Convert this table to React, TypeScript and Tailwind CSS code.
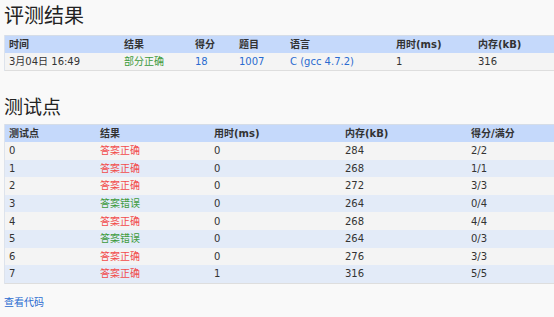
import React from 'react'

const FONT = "font-['DejaVu_Sans','Noto_Sans_CJK_SC',sans-serif]"

// 评测结果表的列宽（截图实测）
const SUMMARY_COLS = 'grid-cols-[115px_71px_44px_51px_106px_82px_1fr]'
const CASE_COLS = 'grid-cols-[91px_114px_131px_126px_1fr]'

type Case = { id: number; ok: boolean; time: number; mem: number; score: string }

const CASES: Case[] = [
  { id: 0, ok: true, time: 0, mem: 284, score: '2/2' },
  { id: 1, ok: true, time: 0, mem: 268, score: '1/1' },
  { id: 2, ok: true, time: 0, mem: 272, score: '3/3' },
  { id: 3, ok: false, time: 0, mem: 264, score: '0/4' },
  { id: 4, ok: true, time: 0, mem: 268, score: '4/4' },
  { id: 5, ok: false, time: 0, mem: 264, score: '0/3' },
  { id: 6, ok: true, time: 0, mem: 276, score: '3/3' },
  { id: 7, ok: true, time: 1, mem: 316, score: '5/5' },
]

const Cell: React.FC<{ children: React.ReactNode; className?: string }> = ({ children, className = '' }) => (
  <div className={`px-1 flex items-center whitespace-nowrap ${className}`}>{children}</div>
)

export default function App() {
  return (
    <div className={`w-[554px] h-[317px] bg-[#f9f9f9] text-[#333] text-[10px] overflow-hidden ${FONT}`}>
      <h1 className="pl-[4px] pt-[4px] text-[20px] leading-[24px] text-[#222] font-normal">评测结果</h1>

      <div className="ml-[4px] mt-[7px] border-l border-[#dde3ec]">
        <div className={`grid ${SUMMARY_COLS} h-[18px] bg-[#c5d9fb] border-t border-[#d5dde8] font-bold text-[#333]`}>
          <Cell>时间</Cell>
          <Cell>结果</Cell>
          <Cell>得分</Cell>
          <Cell>题目</Cell>
          <Cell>语言</Cell>
          <Cell>用时(ms)</Cell>
          <Cell>内存(kB)</Cell>
        </div>
        <div className={`grid ${SUMMARY_COLS} h-[18px] bg-[#f4f4f4] border-b border-[#dedede]`}>
          <Cell>3月04日 16:49</Cell>
          <Cell className="text-[#3c9a3c]">部分正确</Cell>
          <Cell className="text-[#2a6bd0]">18</Cell>
          <Cell className="text-[#2a6bd0]">1007</Cell>
          <Cell className="text-[#2a6bd0]">C (gcc 4.7.2)</Cell>
          <Cell>1</Cell>
          <Cell>316</Cell>
        </div>
      </div>

      <h2 className="pl-[4px] mt-[24px] text-[19px] leading-[24px] text-[#222] font-normal">测试点</h2>

      <div className="ml-[4px] mt-[5px] border-l border-[#dde3ec]">
        <div className={`grid ${CASE_COLS} h-[18px] bg-[#c5d9fb] border-t border-[#d5dde8] font-bold`}>
          <Cell>测试点</Cell>
          <Cell>结果</Cell>
          <Cell>用时(ms)</Cell>
          <Cell>内存(kB)</Cell>
          <Cell>得分/满分</Cell>
        </div>
        {CASES.map((c, i) => (
          <div
            key={c.id}
            className={`grid ${CASE_COLS} h-[17.6px] ${i % 2 === 0 ? 'bg-[#f4f4f4]' : 'bg-[#e3ebf8]'}`}
          >
            <Cell>{c.id}</Cell>
            <Cell className={c.ok ? 'text-[#f24b4b]' : 'text-[#3c9a3c]'}>{c.ok ? '答案正确' : '答案错误'}</Cell>
            <Cell>{c.time}</Cell>
            <Cell>{c.mem}</Cell>
            <Cell>{c.score}</Cell>
          </div>
        ))}
        <div className="h-px bg-[#dedede]" />
      </div>

      <a className="block pl-[4px] mt-[11px] text-[#2a6bd0]">查看代码</a>
    </div>
  )
}
